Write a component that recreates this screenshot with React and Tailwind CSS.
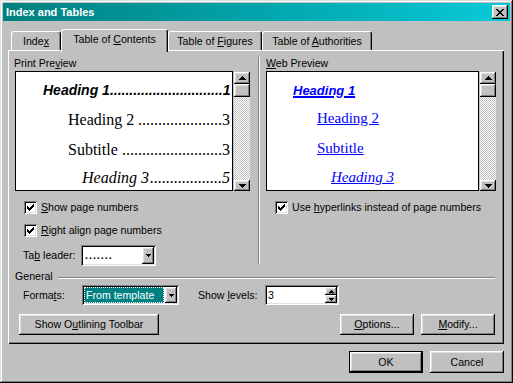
import React from 'react'

const raised = 'shadow-[inset_-1px_-1px_#000,inset_1px_1px_#fff,inset_-2px_-2px_#808080,inset_2px_2px_#dfdfdf]'
const sunken = 'shadow-[inset_1px_1px_#808080,inset_-1px_-1px_#fff,inset_2px_2px_#000,inset_-2px_-2px_#dfdfdf]'
const track = 'bg-[image:repeating-conic-gradient(#fff_0%_25%,#c0c0c0_0%_50%)] bg-[length:2px_2px]'
const serif = "font-['Liberation_Serif',serif]"
const sans = "font-['Liberation_Sans',Arial,sans-serif]"

function ArrowUp() {
  return (
    <svg width="7" height="4" viewBox="0 0 7 4" shapeRendering="crispEdges">
      <path d="M3 0h1v1h1v1h1v1h1v1H0V3h1V2h1V1h1z" fill="#000" />
    </svg>
  )
}

function ArrowDown({ small }) {
  if (small) {
    return (
      <svg width="5" height="3" viewBox="0 0 5 3" shapeRendering="crispEdges">
        <path d="M0 0h5v1h-1v1h-1v1h-1v-1h-1v-1h-1z" fill="#000" />
      </svg>
    )
  }
  return (
    <svg width="7" height="4" viewBox="0 0 7 4" shapeRendering="crispEdges">
      <path d="M0 0h7v1h-1v1h-1v1h-1v1h-1v-1h-1v-1h-1v-1h-1z" fill="#000" />
    </svg>
  )
}

function SmallUp() {
  return (
    <svg width="5" height="3" viewBox="0 0 5 3" shapeRendering="crispEdges">
      <path d="M2 0h1v1h1v1h1v1H0V2h1V1h1z" fill="#000" />
    </svg>
  )
}

function ScrollBar() {
  return (
    <div className={`w-[16px] h-[119px] mt-px flex flex-col ${track}`}>
      <div className={`h-[12px] bg-[#c0c0c0] ${raised} flex items-center justify-center`}>
        <ArrowUp />
      </div>
      <div className={`h-[13px] bg-[#c0c0c0] ${raised}`} />
      <div className="flex-1" />
      <div className={`h-[11px] bg-[#c0c0c0] ${raised} flex items-center justify-center`}>
        <ArrowDown />
      </div>
    </div>
  )
}

function Check() {
  return (
    <div className={`w-[13px] h-[13px] bg-white ${sunken} flex items-center justify-center shrink-0`}>
      <svg width="7" height="7" viewBox="0 0 7 7" shapeRendering="crispEdges" fill="#000">
        <rect x="6" y="0" width="1" height="1" />
        <rect x="5" y="1" width="2" height="1" />
        <rect x="0" y="2" width="1" height="1" />
        <rect x="4" y="2" width="3" height="1" />
        <rect x="0" y="3" width="2" height="1" />
        <rect x="3" y="3" width="3" height="1" />
        <rect x="0" y="4" width="5" height="1" />
        <rect x="1" y="5" width="3" height="1" />
        <rect x="2" y="6" width="1" height="1" />
      </svg>
    </div>
  )
}

function DropBtn() {
  return (
    <div className={`w-[12px] h-full bg-[#c0c0c0] ${raised} flex items-center justify-center shrink-0`}>
      <ArrowDown small />
    </div>
  )
}

// leader dots sit against the page number, like a right tab with dot leader
function TocRow({ label, page, dots, className }) {
  return (
    <div className={`flex whitespace-nowrap ${className}`}>
      <span>{label}</span>
      <span className="ml-auto">{'.'.repeat(dots)}</span>
      <span>{page}</span>
    </div>
  )
}

function Btn({ className, children }) {
  return (
    <div className={`h-[21px] bg-[#c0c0c0] ${raised} flex items-center justify-center ${className}`}>
      {children}
    </div>
  )
}

function Tab({ className, children }) {
  return (
    <div
      className={`h-[19px] border-l border-t border-r border-l-white border-t-white border-r-black rounded-t-[3px] shadow-[inset_-1px_0_#808080] flex justify-center pt-[3px] ${className}`}
    >
      <span>{children}</span>
    </div>
  )
}

export default function App() {
  return (
    <div
      className={`w-[513px] h-[383px] bg-[#c0c0c0] p-[3px] flex flex-col text-black text-[10.6px] leading-[13px] ${sans} shadow-[inset_-1px_-1px_#000,inset_1px_1px_#dfdfdf,inset_-2px_-2px_#808080,inset_2px_2px_#fff]`}
    >
      {/* title bar */}
      <div className="h-[18px] flex items-center pl-[3px] pr-[2px] bg-gradient-to-r from-[#008080] to-[#08cad8]">
        <span className="text-white font-bold text-[11px]">Index and Tables</span>
        <div className={`ml-auto w-[16px] h-[14px] bg-[#c0c0c0] ${raised} flex items-center justify-center`}>
          <svg width="8" height="7" viewBox="0 0 8 7" shapeRendering="crispEdges" fill="#000">
            <rect x="0" y="0" width="2" height="1" />
            <rect x="6" y="0" width="2" height="1" />
            <rect x="1" y="1" width="2" height="1" />
            <rect x="5" y="1" width="2" height="1" />
            <rect x="2" y="2" width="4" height="1" />
            <rect x="3" y="3" width="2" height="1" />
            <rect x="2" y="4" width="4" height="1" />
            <rect x="1" y="5" width="2" height="1" />
            <rect x="5" y="5" width="2" height="1" />
            <rect x="0" y="6" width="2" height="1" />
            <rect x="6" y="6" width="2" height="1" />
          </svg>
        </div>
      </div>

      <div className="pl-[5px] flex flex-col">
        {/* tabs */}
        <div className="flex items-end h-[21px] mt-[8px] pl-[3px] relative z-10">
          <Tab className="w-[50px]">
            Inde<u>x</u>
          </Tab>
          <div className="w-[107px] h-[23px] -mb-[2px] bg-[#c0c0c0] border-l border-t border-r border-l-white border-t-white border-r-black rounded-t-[3px] shadow-[inset_-1px_0_#808080] flex justify-center pt-[3px]">
            <span>
              Table of <u>C</u>ontents
            </span>
          </div>
          <Tab className="w-[94px]">
            Table of <u>F</u>igures
          </Tab>
          <Tab className="w-[110px]">
            Table of <u>A</u>uthorities
          </Tab>
        </div>

        {/* tab panel */}
        <div className="w-[496px] h-[294px] flex flex-col shadow-[inset_1px_1px_#fff,inset_-1px_-1px_#000,inset_-2px_-2px_#808080]">
          <div className="flex h-[216px]">
            {/* print preview column */}
            <div className="w-[250px] pl-[6px] pt-[7px] flex flex-col">
              <div className="mb-px">
                Print Pre<u>v</u>iew
              </div>
              <div className="flex gap-px ml-px">
                <div className="w-[218px] h-[120px] bg-white border border-black overflow-hidden pl-[27px] pr-[2px] pt-[10px]">
                  <TocRow
                    label="Heading 1"
                    page="1"
                    dots={29}
                    className="text-[14px] leading-[16px] font-bold italic"
                  />
                  <TocRow
                    label="Heading 2"
                    page="3"
                    dots={21}
                    className={`ml-[25px] mt-[13px] text-[16px] leading-[18px] ${serif}`}
                  />
                  <TocRow
                    label="Subtitle"
                    page="3"
                    dots={25}
                    className={`ml-[25px] mt-[12px] text-[16px] leading-[18px] ${serif}`}
                  />
                  <TocRow
                    label="Heading 3"
                    page="5"
                    dots={18}
                    className={`ml-[39px] mt-[10px] text-[16px] leading-[18px] italic ${serif}`}
                  />
                </div>
                <ScrollBar />
              </div>
              <div className="flex items-center gap-[4px] ml-[10px] mt-[10px] h-[13px]">
                <Check />
                <span>
                  <u>S</u>how page numbers
                </span>
              </div>
              <div className="flex items-center gap-[4px] ml-[10px] mt-[10px] h-[13px]">
                <Check />
                <span>
                  <u>R</u>ight align page numbers
                </span>
              </div>
              <div className="flex items-center ml-[9px] mt-[8px] h-[21px]">
                <span className="w-[58px]">
                  Ta<u>b</u> leader:
                </span>
                <div className={`w-[75px] h-[21px] bg-white ${sunken} flex items-center p-[2px]`}>
                  <span className="flex-1 pl-[2px] tracking-[1px] text-black font-bold">.......</span>
                  <DropBtn />
                </div>
              </div>
            </div>

            {/* divider */}
            <div className="w-[2px] mt-[7px] h-[207px] border-l border-l-[#808080] border-r border-r-white" />

            {/* web preview column */}
            <div className="flex-1 pl-[6px] pt-[7px] flex flex-col">
              <div className="mb-px">
                <u>W</u>eb Preview
              </div>
              <div className="flex gap-px">
                <div className="w-[213px] h-[120px] bg-white border border-black overflow-hidden pl-[26px] pt-[11px] text-[#0000ff] whitespace-nowrap">
                  <div className="text-[13px] leading-[15px] font-bold italic">
                    <span className="underline decoration-2">Heading 1</span>
                  </div>
                  <div className={`ml-[24px] mt-[12px] text-[15px] leading-[17px] ${serif}`}>
                    <span className="underline">Heading 2</span>
                  </div>
                  <div className={`ml-[24px] mt-[13px] text-[15px] leading-[17px] ${serif}`}>
                    <span className="underline">Subtitle</span>
                  </div>
                  <div className={`ml-[38px] mt-[12px] text-[15px] leading-[17px] italic ${serif}`}>
                    <span className="underline">Heading 3</span>
                  </div>
                </div>
                <ScrollBar />
              </div>
              <div className="flex items-center gap-[4px] ml-[9px] mt-[10px] h-[13px]">
                <Check />
                <span>
                  Use <u>h</u>yperlinks instead of page numbers
                </span>
              </div>
            </div>
          </div>

          {/* general */}
          <div className="flex h-[13px] mt-[4px] pl-[7px] pr-[9px]">
            <span>General</span>
            <div className="flex-1 ml-[5px] mt-[7px] h-[2px] border-t border-t-[#808080] border-b border-b-white" />
          </div>

          <div className="flex items-center h-[20px] mt-[2px] pl-[15px]">
            <span className="w-[59px]">
              Forma<u>t</u>s:
            </span>
            <div className={`w-[97px] h-[20px] bg-white ${sunken} flex items-center p-[2px]`}>
              <div className="flex-1 h-full bg-[#008080] text-white flex items-center pl-[2px] mr-px outline-1 outline-dotted outline-white -outline-offset-1">
                From template
              </div>
              <DropBtn />
            </div>
            <span className="ml-[19px] w-[67px]">
              Show <u>l</u>evels:
            </span>
            <div className={`w-[74px] h-[20px] bg-white ${sunken} flex items-center p-[2px]`}>
              <span className="flex-1 pl-px">3</span>
              <div className="w-[12px] h-full flex flex-col">
                <div className={`flex-1 bg-[#c0c0c0] ${raised} flex items-center justify-center`}>
                  <SmallUp />
                </div>
                <div className={`flex-1 bg-[#c0c0c0] ${raised} flex items-center justify-center`}>
                  <ArrowDown small />
                </div>
              </div>
            </div>
          </div>

          <div className="flex items-center mt-[9px] pl-[11px] pr-[9px]">
            <Btn className="w-[140px]">
              Show O<u>u</u>tlining Toolbar
            </Btn>
            <Btn className="w-[74px] ml-auto">
              <span>
                <u>O</u>ptions...
              </span>
            </Btn>
            <Btn className="w-[74px] ml-[7px]">
              <span>
                <u>M</u>odify...
              </span>
            </Btn>
          </div>
        </div>

        {/* dialog buttons */}
        <div className="flex justify-end gap-[7px] mt-[7px] w-[496px]">
          <div className="w-[74px] h-[22px] border border-black">
            <Btn className="w-full h-full">OK</Btn>
          </div>
          <Btn className="w-[74px] h-[22px]">Cancel</Btn>
        </div>
      </div>
    </div>
  )
}
